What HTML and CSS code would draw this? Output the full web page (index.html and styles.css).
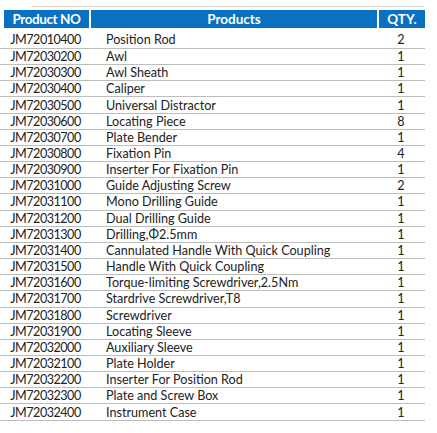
FILE: index.html
```html
<!DOCTYPE html>
<html>
<head>
<meta charset="utf-8">
<link rel="stylesheet" href="styles.css">
</head>
<body>
<div class="sheet">
  <div class="topline"></div>
  <div class="head">
    <div class="hcell">Product NO</div>
    <div class="hcell">Products</div>
    <div class="hcell">QTY.</div>
  </div>
  <div class="body">
    <div class="row first"><span class="no">JM72010400</span><span class="name">Position Rod</span><span class="qty">2</span></div>
    <div class="row"><span class="no">JM72030200</span><span class="name">Awl</span><span class="qty">1</span></div>
    <div class="row"><span class="no">JM72030300</span><span class="name">Awl Sheath</span><span class="qty">1</span></div>
    <div class="row"><span class="no">JM72030400</span><span class="name">Caliper</span><span class="qty">1</span></div>
    <div class="row"><span class="no">JM72030500</span><span class="name">Universal Distractor</span><span class="qty">1</span></div>
    <div class="row"><span class="no">JM72030600</span><span class="name">Locating Piece</span><span class="qty">8</span></div>
    <div class="row"><span class="no">JM72030700</span><span class="name">Plate Bender</span><span class="qty">1</span></div>
    <div class="row"><span class="no">JM72030800</span><span class="name">Fixation Pin</span><span class="qty">4</span></div>
    <div class="row"><span class="no">JM72030900</span><span class="name">Inserter For Fixation Pin</span><span class="qty">1</span></div>
    <div class="row"><span class="no">JM72031000</span><span class="name">Guide Adjusting Screw</span><span class="qty">2</span></div>
    <div class="row"><span class="no">JM72031100</span><span class="name">Mono Drilling Guide</span><span class="qty">1</span></div>
    <div class="row"><span class="no">JM72031200</span><span class="name">Dual Drilling Guide</span><span class="qty">1</span></div>
    <div class="row"><span class="no">JM72031300</span><span class="name">Drilling,Φ2.5mm</span><span class="qty">1</span></div>
    <div class="row"><span class="no">JM72031400</span><span class="name">Cannulated Handle With Quick Coupling</span><span class="qty">1</span></div>
    <div class="row"><span class="no">JM72031500</span><span class="name">Handle With Quick Coupling</span><span class="qty">1</span></div>
    <div class="row"><span class="no">JM72031600</span><span class="name">Torque-limiting Screwdriver,2.5Nm</span><span class="qty">1</span></div>
    <div class="row"><span class="no">JM72031700</span><span class="name">Stardrive Screwdriver,T8</span><span class="qty">1</span></div>
    <div class="row"><span class="no">JM72031800</span><span class="name">Screwdriver</span><span class="qty">1</span></div>
    <div class="row"><span class="no">JM72031900</span><span class="name">Locating Sleeve</span><span class="qty">1</span></div>
    <div class="row"><span class="no">JM72032000</span><span class="name">Auxiliary Sleeve</span><span class="qty">1</span></div>
    <div class="row"><span class="no">JM72032100</span><span class="name">Plate Holder</span><span class="qty">1</span></div>
    <div class="row"><span class="no">JM72032200</span><span class="name">Inserter For Position Rod</span><span class="qty">1</span></div>
    <div class="row"><span class="no">JM72032300</span><span class="name">Plate and Screw Box</span><span class="qty">1</span></div>
    <div class="row"><span class="no">JM72032400</span><span class="name">Instrument Case</span><span class="qty">1</span></div>
  </div>
</div>
</body>
</html>
```
FILE: styles.css
```css
html, body {
  margin: 0;
  padding: 0;
  background: #ffffff;
}
.sheet {
  width: 425px;
  font-family: Lato, "Open Sans", sans-serif;
  color: #222222;
}
.topline {
  height: 1px;
  margin: 6px 1px 0 32px;
  background: #d4d4d4;
}
.head {
  margin: 3px 0 0 4px;
  display: grid;
  grid-template-columns: 85px 286px 46px;
  column-gap: 2px;
  height: 18px;
}
.hcell {
  background: #0a70c2;
  color: #ffffff;
  font-weight: bold;
  font-size: 13.5px;
  line-height: 18px;
  text-align: center;
}
.hcell:first-child {
  letter-spacing: -0.4px;
}
.body {
  display: flex;
  flex-direction: column;
}
.row {
  display: grid;
  grid-template-columns: 91px 287px 47px;
  height: 15.17px;
  line-height: 15px;
  font-size: 12.6px;
  border-bottom: 1px solid #bdbdbd;
  align-items: center;
}
.row.first {
  height: 20px;
  align-items: end;
}
.row.first span {
  line-height: 16px;
}
.no {
  text-align: center;
  letter-spacing: -0.5px;
}
.name {
  padding-left: 15px;
  white-space: nowrap;
}
.qty {
  text-align: center;
  padding-right: 1px;
}
```
